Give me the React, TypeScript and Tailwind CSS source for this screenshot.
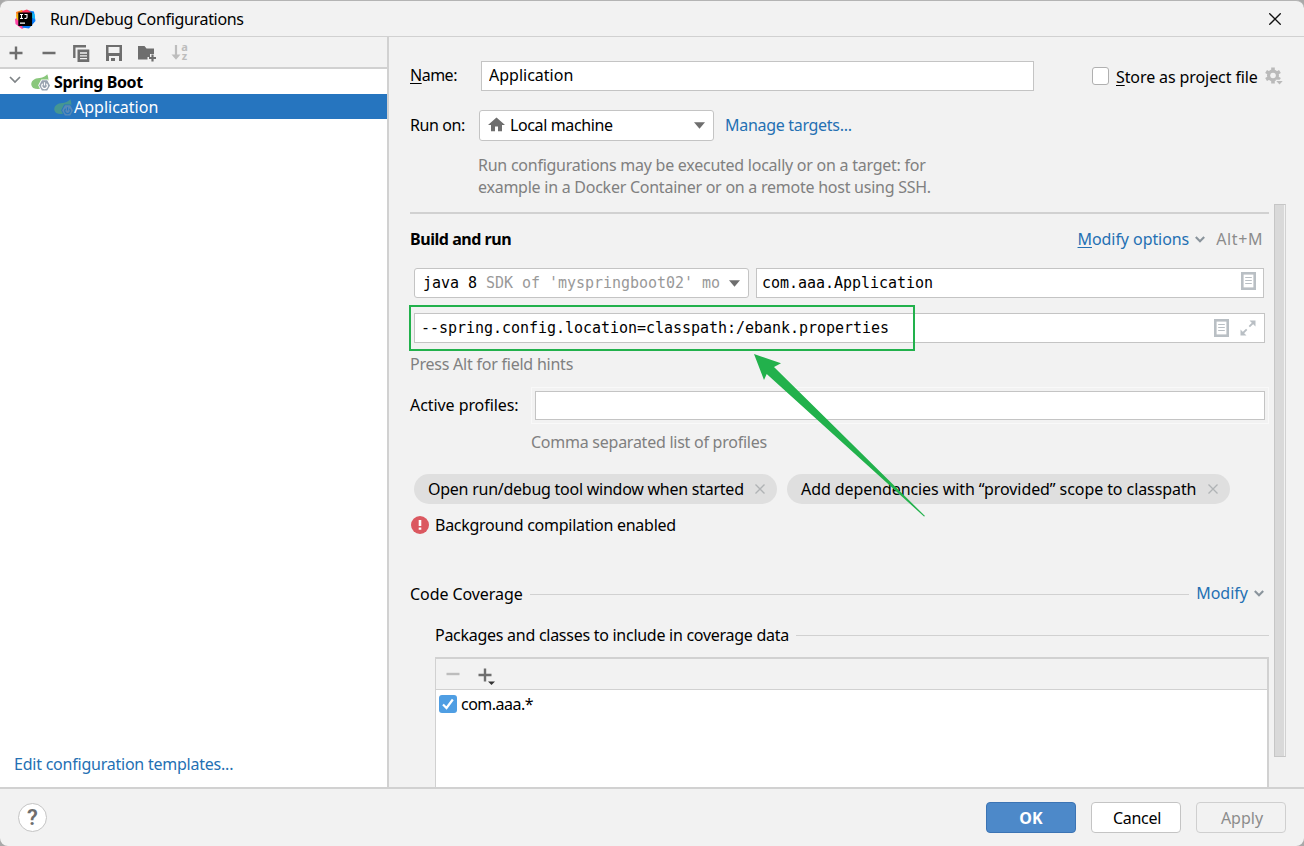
import { useState, type ReactNode } from 'react';

function IdeaLogo() {
  return (
    <svg width="21" height="20" viewBox="0 0 21 20">
      <path d="M1 3L7 1L10 4L9 12H2Z" fill="#fc801d" />
      <path d="M0 10L6 7L12 17L7 20L0.5 15Z" fill="#ff45a8" />
      <path d="M1 6L5 4L6 12L2 11Z" fill="#fdb60d" />
      <path d="M11 1L19 2.5L20.5 12L14 19.5L7 18.5L10 10Z" fill="#087cfa" />
      <path d="M7 2L12 0.5L16 3L14 7H8Z" fill="#fe315d" />
      <path d="M16 3L19.5 5L20 10L17 9Z" fill="#12b7f5" />
      <rect x="3.3" y="3.5" width="13.8" height="13.5" fill="#000" />
      <path d="M5 5.5h3M6.5 5.5v4M5 9.5h3M9.5 5.5h2.5v3q0 1.2-2.5 1" stroke="#fff" strokeWidth="1.1" fill="none" />
      <path d="M5 14.2h5" stroke="#fff" strokeWidth="1.2" />
    </svg>
  );
}

function SpringIcon({ faded = false }: { faded?: boolean }) {
  return (
    <svg width="19" height="18" viewBox="0 0 19 18" className={faded ? 'opacity-45' : ''}>
      <path d="M16.3 0.3C17.8 4 18.2 9 15 12C12 15 6 16 2.2 14C-1 11.5 0 6.8 3.5 5.2C7.5 3.4 13 4.6 16.3 0.3Z" fill={faded ? '#6cc05c' : '#8ac77c'} />
      <path d="M10.2 5.4h6.8l3 5.9-3 5.9h-6.8l-3-5.9Z" fill={faded ? '#2675bf' : '#fff'} />
      <path d="M10.9 6.2h5.3l2.8 5.2-2.8 5.2h-5.3l-2.8-5.2Z" fill="#98a3af" />
      <path d="M11.7 9.7a2.8 2.8 0 1 0 3.7 0M13.5 8.2v3.2" stroke={faded ? '#2675bf' : '#fff'} strokeWidth="1.2" fill="none" />
    </svg>
  );
}

function PlusIcon() {
  return (
    <svg width="14" height="14" viewBox="0 0 14 14">
      <path d="M7 0.5v13M0.5 7h13" stroke="#6e6e6e" strokeWidth="2.4" />
    </svg>
  );
}

function MinusIcon({ color = '#6e6e6e' }: { color?: string }) {
  return (
    <svg width="14" height="14" viewBox="0 0 14 14">
      <path d="M0.5 7h13" stroke={color} strokeWidth="2.4" />
    </svg>
  );
}

function CopyIcon() {
  return (
    <svg width="17" height="17" viewBox="0 0 17 17">
      <path d="M1.3 13V1.3H13" stroke="#6e6e6e" strokeWidth="2.4" fill="none" />
      <path d="M4.5 4.5H16.3V17H4.5Z" fill="#6e6e6e" />
      <path d="M7 8h7M7 10.8h7M7 13.6h7" stroke="#f2f2f2" strokeWidth="1.3" />
    </svg>
  );
}

function SaveIcon() {
  return (
    <svg width="16" height="16" viewBox="0 0 16 16">
      <path d="M0 0H16V16H13V11H3V16H0Z" fill="#6e6e6e" />
      <path d="M2.5 2h11v6h-11Z" fill="#f2f2f2" />
      <path d="M5 13h4v3H5Z" fill="#6e6e6e" />
    </svg>
  );
}

function FolderAddIcon() {
  return (
    <svg width="19" height="17" viewBox="0 0 19 17">
      <path d="M0 1H6.5L8.5 3.5H16V9H12V12H9.5V14.5H0Z" fill="#6e6e6e" />
      <path d="M14.5 9.5v7M11 13h7" stroke="#6e6e6e" strokeWidth="2.2" />
    </svg>
  );
}

function SortIcon() {
  return (
    <svg width="18" height="18" viewBox="0 0 18 18" className="overflow-visible">
      <path d="M5 1v10" stroke="#bdbdbd" strokeWidth="2.2" />
      <path d="M0.5 10.5h9L5 15.8Z" fill="#bdbdbd" />
      <text x="10.3" y="7.2" fontSize="11" fontWeight="700" fill="#bdbdbd" fontFamily="Noto Sans">a</text>
      <text x="10.8" y="16.2" fontSize="11" fontWeight="700" fill="#bdbdbd" fontFamily="Noto Sans">z</text>
    </svg>
  );
}

function HomeIcon() {
  return (
    <svg width="17" height="15" viewBox="0 0 17 15">
      <path d="M8.5 0.5L17 8H14V14.2H10V9.5H7V14.2H3V8H0Z" fill="#6e6e6e" />
    </svg>
  );
}

function GearIcon() {
  return (
    <svg width="18" height="18" viewBox="0 0 18 18">
      <g fill="#bababa">
        <path d="M6.2 0.5h3.6v16h-3.6Z" />
        <path d="M6.2 0.5h3.6v16h-3.6Z" transform="rotate(60 8 8.5)" />
        <path d="M6.2 0.5h3.6v16h-3.6Z" transform="rotate(120 8 8.5)" />
        <circle cx="8" cy="8.5" r="6" />
      </g>
      <circle cx="8" cy="8.5" r="2.8" fill="#f2f2f2" />
      <path d="M10.5 12.8h7.5v2l-3 3.2h-2.5Z" fill="#f2f2f2" />
      <path d="M11.3 14h6.4l-3.2 3.6Z" fill="#bababa" />
    </svg>
  );
}

function Chevron() {
  return (
    <svg width="10" height="7" viewBox="0 0 10 7">
      <path d="M0.8 1L5 5.2L9.2 1" stroke="#8a949c" strokeWidth="2.1" fill="none" />
    </svg>
  );
}

function DropArrow() {
  return (
    <svg width="11" height="7" viewBox="0 0 11 7">
      <path d="M0 0.3H11L5.5 6.7Z" fill="#6e6e6e" />
    </svg>
  );
}

function DocIcon() {
  return (
    <svg width="15" height="18" viewBox="0 0 15 18">
      <rect x="1.3" y="1.3" width="12.4" height="15.4" fill="#fff" stroke="#b9bfc4" strokeWidth="2.6" />
      <path d="M4.2 5.5h6.6M4.2 8.5h6.6M4.2 11.5h6.6" stroke="#b9bfc4" strokeWidth="1.2" />
    </svg>
  );
}

function ExpandIcon() {
  return (
    <svg width="16" height="16" viewBox="0 0 16 16">
      <path d="M9.5 0.5h6V6.5Z M0.5 9.5V15.5H6.5Z" fill="#b9bfc4" />
      <path d="M9.3 6.7L13.5 2.5M6.7 9.3L2.5 13.5" stroke="#b9bfc4" strokeWidth="1.8" />
    </svg>
  );
}

function Chip({ children, className }: { children: ReactNode; className: string }) {
  return (
    <div className={`flex h-[30px] items-center justify-between rounded-full bg-[#dfdfdf] pl-3.5 pr-3 ${className}`}>
      <span>{children}</span>
      <svg width="10" height="10" viewBox="0 0 10 10">
        <path d="M0.5 0.5l9 9M9.5 0.5l-9 9" stroke="#b0b3b5" strokeWidth="1.3" />
      </svg>
    </div>
  );
}

function Sidebar() {
  return (
    <aside className="flex w-[389px] shrink-0 flex-col border-r-2 border-[#d1d1d1] bg-white">
      <div className="flex h-8 shrink-0 items-center border-b-2 border-[#d1d1d1] bg-[#f2f2f2] pl-[9px] pt-0.5">
        <PlusIcon />
        <span className="ml-[19px] flex"><MinusIcon /></span>
        <span className="ml-[17px] flex"><CopyIcon /></span>
        <span className="ml-4 flex"><SaveIcon /></span>
        <span className="ml-4 flex"><FolderAddIcon /></span>
        <span className="ml-3.5 flex"><SortIcon /></span>
      </div>
      <div className="flex h-[25px] shrink-0 items-center pl-[9px] pt-0.5">
        <svg width="12" height="8" viewBox="0 0 12 8" className="mb-1.5">
          <path d="M1 1l5 5 5-5" stroke="#7f8487" strokeWidth="1.7" fill="none" />
        </svg>
        <span className="ml-2.5 mr-1 flex"><SpringIcon /></span>
        <span className="pb-0.5 font-bold tracking-[-0.4px]">Spring Boot</span>
      </div>
      <div className="flex h-[25px] shrink-0 items-center bg-[#2675bf] pl-[54px] pt-0.5 text-white">
        <SpringIcon faded />
        <span className="ml-px pb-0.5">Application</span>
      </div>
      <a className="mb-3 ml-3.5 mt-auto tracking-[-0.23px] text-[#2470b3]">Edit configuration templates...</a>
    </aside>
  );
}

function Coverage() {
  const [checked, setChecked] = useState(true);
  return (
    <div className="ml-[25px] flex min-h-0 flex-1 flex-col border-l border-r-2 border-t-2 border-[#d1d1d1] bg-white">
      <div className="flex h-[31px] shrink-0 items-center border-b border-[#d1d1d1] bg-[#f2f2f2] pl-2.5">
        <MinusIcon color="#bdbdbd" />
        <svg width="17" height="17" viewBox="0 0 17 17" className="ml-[18px] mt-1">
          <path d="M7 0.5v13M0.5 7h13" stroke="#6e6e6e" strokeWidth="2.4" />
          <path d="M10 13.5h7l-3.5 3.5Z" fill="#333" />
        </svg>
      </div>
      <div className="flex items-center pl-[3px] pt-[3px]">
        <button
          type="button"
          onClick={() => setChecked(!checked)}
          className="flex h-[18px] w-[18px] items-center justify-center rounded-[3px] bg-[#4f9ee3]"
        >
          {checked && (
            <svg width="12" height="12" viewBox="0 0 12 12">
              <path d="M1 6.5L4.5 10L10.8 1.5" stroke="#fff" strokeWidth="2.2" fill="none" />
            </svg>
          )}
        </button>
        <span className="ml-1 tracking-[-0.5px]">com.aaa.*</span>
      </div>
    </div>
  );
}

// green callout pointing at the program arguments
function Callout() {
  return (
    <svg width="1304" height="846" viewBox="0 0 1304 846" className="pointer-events-none absolute -top-px left-0">
      <rect x="410" y="306" width="504" height="44" fill="none" stroke="#22b14c" strokeWidth="2" />
      <path d="M754 354L781 363.3L774 367L925 516L924 516.5L766.7 374L764 380Z" fill="#22b14c" />
    </svg>
  );
}

function BuildAndRun() {
  return (
    <>
      <div className="mt-[14px] flex h-6 items-center pb-0.5">
        <span className="font-bold tracking-[-0.45px]">Build and run</span>
        <span className="ml-auto tracking-[-0.07px] text-[#2470b3]"><span className="underline underline-offset-2">M</span>odify options</span>
        <span className="ml-1.5"><Chevron /></span>
        <span className="ml-[11px] mr-1.5 tracking-[0.6px] text-[#8c8c8c]">Alt+M</span>
      </div>

      <div className="ml-1 mt-4 flex gap-[7px] font-['DejaVu_Sans_Mono',monospace] text-[15px] tracking-[-0.03px]">
        <div className="flex h-[30px] w-[335px] items-center overflow-hidden whitespace-pre rounded-[3px] border border-[#c4c4c4] bg-white pl-2 pr-2">
          <span>java 8 </span>
          <span className="w-[234px] overflow-hidden text-[#999]">SDK of 'myspringboot02' mo</span>
          <span className="ml-auto"><DropArrow /></span>
        </div>
        <div className="flex h-[30px] w-[508px] items-center justify-between border border-[#c4c4c4] bg-white pl-[5px] pr-[7px]">
          <span>com.aaa.Application</span>
          <span className="mb-1 flex"><DocIcon /></span>
        </div>
      </div>

      <div className="ml-1 mt-[15px] flex h-[30px] w-[851px] items-center border border-[#c4c4c4] bg-white pl-1.5 pr-2 font-['DejaVu_Sans_Mono',monospace] text-[15px] tracking-[-0.03px]">
        <span>--spring.config.location=classpath:/ebank.properties</span>
        <span className="ml-auto mr-[11px] flex"><DocIcon /></span>
        <ExpandIcon />
      </div>
      <p className="mt-2.5 tracking-[-0.23px] text-[#808080]">Press Alt for field hints</p>

      <div className="mt-4 flex h-[29px] items-center">
        <label className="w-[125px] pb-0.5 tracking-[-0.07px]">Active profiles:</label>
        <input className="h-[29px] w-[730px] border border-[#c4c4c4] bg-white px-2 outline outline-offset-[3px] outline-[#f9f9f9]" />
      </div>
      <p className="ml-[121px] mt-[11px] tracking-[-0.25px] text-[#808080]">Comma separated list of profiles</p>

      <div className="ml-1 mt-[21px] flex gap-2.5">
        <Chip className="w-[363px] tracking-[-0.25px]">Open run/debug tool window when started</Chip>
        <Chip className="w-[443px] tracking-[-0.08px]">Add dependencies with “provided” scope to classpath</Chip>
      </div>
      <div className="mt-[9px] flex h-6 items-center gap-1.5 pl-px">
        <svg width="18" height="18" viewBox="0 0 18 18">
          <circle cx="9" cy="9" r="9" fill="#db5860" />
          <path d="M9 4v6M9 11.5v2.3" stroke="#fff" strokeWidth="2.6" />
        </svg>
        <span className="tracking-[-0.27px]">Background compilation enabled</span>
      </div>
    </>
  );
}

export default function App() {
  const [name, setName] = useState('Application');
  const [stored, setStored] = useState(false);

  return (
    <div className="h-[846px] w-[1304px] overflow-hidden bg-[#a9a9a9]">
      <div className="relative flex h-full w-full flex-col overflow-hidden rounded-lg border-t border-[#b4b4b4] bg-[#f2f2f2] font-['Noto_Sans','Open_Sans',sans-serif] text-[16px] leading-[22px] text-black">
        <header className="flex h-9 shrink-0 items-center border-b border-[#d1d1d1] pl-[15px] pr-[23px]">
          <IdeaLogo />
          <h1 className="ml-3.5 tracking-[-0.33px]">Run/Debug Configurations</h1>
          <svg width="12" height="12" viewBox="0 0 12 12" className="ml-auto">
            <path d="M0.3 0.3l11.4 11.4M11.7 0.3l-11.4 11.4" stroke="#111" strokeWidth="1.3" />
          </svg>
        </header>

        <div className="flex min-h-0 flex-1 border-b-2 border-[#d1d1d1]">
          <Sidebar />
          <main className="flex min-w-0 flex-1 flex-col pl-[21px]">
            <div className="mt-6 flex h-[30px] items-center">
              <label className="w-[71px] pb-0.5 tracking-[-0.5px]"><span className="underline underline-offset-2">N</span>ame:</label>
              <input
                value={name}
                onChange={e => setName(e.target.value)}
                className="h-[30px] w-[553px] border border-[#c4c4c4] bg-white px-[7px] pb-0.5 outline-none"
              />
              <button
                type="button"
                onClick={() => setStored(!stored)}
                className="ml-[58px] h-[18px] w-[17px] rounded-[3px] border border-[#b0b0b0] bg-white"
              />
              <span className="ml-[7px] pt-0.5 tracking-[-0.1px]"><span className="underline underline-offset-2">S</span>tore as project file</span>
              <span className="ml-[7px]"><GearIcon /></span>
            </div>

            <div className="mt-[19px] flex h-[31px] items-center">
              <label className="w-[69px] pb-0.5 tracking-[-0.4px]">Run on:</label>
              <div className="flex h-[31px] w-[235px] items-center rounded-[3px] border border-[#c4c4c4] bg-white px-2">
                <span className="mb-0.5 flex"><HomeIcon /></span>
                <span className="ml-[5px] pb-0.5 tracking-[-0.38px]">Local machine</span>
                <span className="ml-auto"><DropArrow /></span>
              </div>
              <a className="ml-[11px] pb-0.5 tracking-[-0.3px] text-[#2470b3]">Manage targets...</a>
            </div>
            <p className="ml-[68px] mt-[13px] w-[480px] tracking-[-0.25px] text-[#808080]">
              Run configurations may be executed locally or on a target: for<br />
              example in a Docker Container or on a remote host using SSH.
            </p>

            <div className="mt-1.5 flex min-h-0 flex-1">
              <section className="flex w-[859px] flex-col pt-2">
                <hr className="h-0.5 shrink-0 border-0 bg-[#d1d1d1]" />
                <BuildAndRun />
                <div className="mt-[46px] flex h-[22px] shrink-0 items-center">
                  <span className="tracking-[-0.07px]">Code Coverage</span>
                  <span className="mx-[7px] h-px flex-1 bg-[#d1d1d1]" />
                  <span className="pb-0.5 text-[#2470b3]">Modify</span>
                  <span className="ml-1.5 mr-[5px] pb-0.5"><Chevron /></span>
                </div>
                <div className="mb-[11px] ml-[25px] mt-[19px] flex h-[22px] shrink-0 items-center gap-[7px]">
                  <span className="tracking-[-0.27px]">Packages and classes to include in coverage data</span>
                  <span className="h-px flex-1 bg-[#d1d1d1]" />
                </div>
                <Coverage />
              </section>
              <div className="ml-[5px] h-[553px] w-3 border border-[#c6c6c6] border-r-[#d1d1d1] bg-[#d9d9d9] shadow-[inset_-1px_0_0_#f2f2f2]" />
            </div>
          </main>
        </div>

        <footer className="flex h-[57px] shrink-0 items-center gap-[15px] pb-px pl-[18px] pr-[18px]">
          <button className="mr-auto flex h-[29px] w-[29px] items-center justify-center rounded-full border border-[#c4c4c4] bg-white pt-0.5 font-['Roboto',sans-serif] text-[22px] font-semibold text-[#6e6e6e]">?</button>
          <button className="h-[31px] w-[90px] rounded-[4px] border border-[#3c74b4] bg-[#4d89c9] pt-0.5 font-bold text-white">OK</button>
          <button className="h-[31px] w-[90px] rounded-[4px] border border-[#c4c4c4] bg-white pl-0.5 pt-0.5 tracking-[-0.3px]">Cancel</button>
          <button className="h-[31px] w-[90px] rounded-[4px] border border-[#cfcfcf] pl-0.5 pt-0.5 text-[#8c8c8c]">Apply</button>
        </footer>
        <Callout />
      </div>
    </div>
  );
}
